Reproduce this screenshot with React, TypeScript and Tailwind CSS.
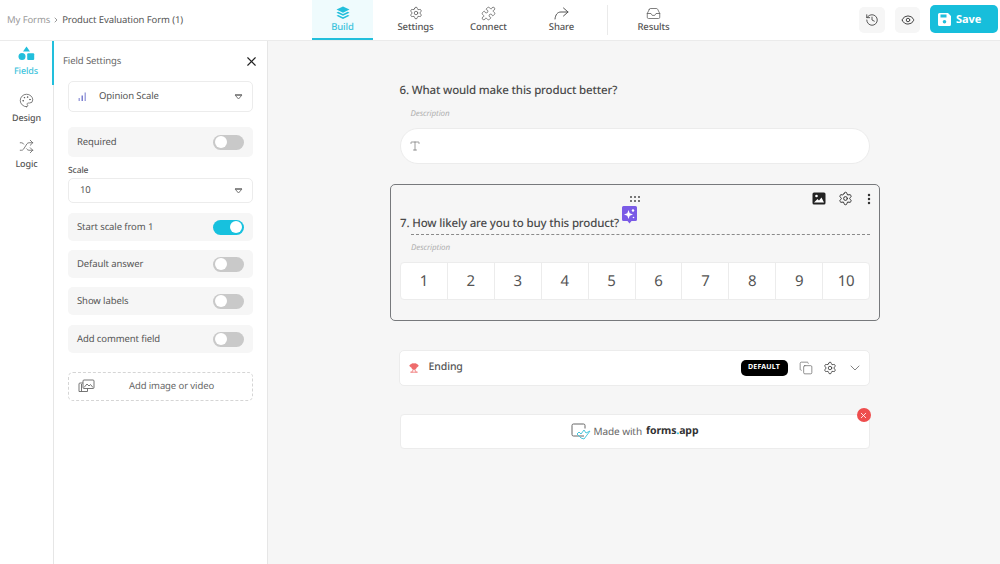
import React from 'react';
import { ChevronDown, ChevronRight, Copy, Eye, History, MoreVertical, Palette, Settings, Shuffle, Type, X, Inbox, Puzzle, Trophy } from 'lucide-react';

const font = { fontFamily: '"Noto Sans", "Open Sans", sans-serif' };

const Caret = () => (
  <svg width="9" height="6" viewBox="0 0 9 6" className="text-[#777]">
    <path d="M1 1h7L4.5 5z" fill="none" stroke="currentColor" strokeWidth="1" strokeLinejoin="round" />
    <path d="M1 1h7" stroke="currentColor" strokeWidth="1.4" />
  </svg>
);

const BuildIcon = () => (
  <svg width="14" height="14" viewBox="0 0 14 14" fill="#22bfdc">
    <path d="M7 0.5 13.5 3.6 7 6.7 0.5 3.6z" />
    <path d="M2.2 5.8 7 8.1l4.8-2.3 1.7.9L7 9.8.5 6.7z" />
    <path d="M2.2 8.9 7 11.2l4.8-2.3 1.7.9L7 13 .5 9.8z" />
  </svg>
);

const FieldsIcon = () => (
  <svg width="17" height="15" viewBox="0 0 17 15" fill="#22bfdc">
    <path d="M8.5 0.5 12 5.5H5z" />
    <circle cx="4" cy="10.5" r="3.5" />
    <rect x="9.2" y="7.2" width="7" height="6.8" rx="1" />
  </svg>
);

const ShareArrow = () => (
  <svg width="15" height="13" viewBox="0 0 15 13" fill="none" stroke="#555" strokeWidth="1" strokeLinecap="round" strokeLinejoin="round">
    <path d="M9.5 1 14 5 9.5 9" />
    <path d="M14 5H7C3.5 5 1.500 7.500 1 12" />
  </svg>
);

const SaveIcon = () => (
  <svg width="13" height="13" viewBox="0 0 13 13">
    <path d="M1.500 0H10l3 3v8.500A1.500 1.500 0 0 1 11.500 13h-10A1.500 1.500 0 0 1 0 11.500v-10A1.500 1.500 0 0 1 1.500 0z" fill="#fff" />
    <rect x="2.500" y="1.500" width="6" height="3" fill="#22bfdc" />
    <circle cx="6.500" cy="8.800" r="1.800" fill="#22bfdc" />
  </svg>
);

const ScaleIcon = () => (
  <svg width="9" height="9" viewBox="0 0 9 9" fill="#7b7fd0">
    <rect x="0.500" y="6" width="1.500" height="3" opacity="0.7" />
    <rect x="3.500" y="3.500" width="1.500" height="5.500" />
    <rect x="6.500" y="0.500" width="1.500" height="8.500" opacity="0.7" />
  </svg>
);

const MediaIcon = () => (
  <svg width="17" height="14" viewBox="0 0 17 14" fill="none" stroke="#666" strokeWidth="0.9" strokeLinejoin="round" className="absolute left-[9px] top-[6px]">
    <rect x="5" y="1" width="11" height="8.500" rx="1" />
    <path d="M6 8.500 9 5l2 2 1.500-1.500L15 8.500" />
    <path d="M5 4H2a1 1 0 0 0-1 1v7.500h8.500V9.500" />
    <path d="M3.500 5v7.500" />
  </svg>
);

const PictureIcon = () => (
  <svg width="14" height="13" viewBox="0 0 14 13">
    <rect x="0.500" y="0.500" width="13" height="12" rx="1.500" fill="#222" />
    <circle cx="4.500" cy="4" r="1.300" fill="#fff" />
    <path d="M2 10.500 5.500 7l1.500 1.500L9.500 5.500l2.500 5z" fill="#fff" />
  </svg>
);

const SparkBadge = () => (
  <svg width="15" height="18" viewBox="0 0 15 18" className="absolute left-[231px] top-[21px]">
    <path d="M1.500 0h12A1.500 1.500 0 0 1 15 1.500v12a1.500 1.500 0 0 1-1.500 1.500H9.500l-2 2.500-2-2.500h-4A1.500 1.500 0 0 1 0 13.500v-12A1.500 1.500 0 0 1 1.500 0z" fill="#7a5be6" />
    <path d="M6.500 4 7.700 7.300 11 8.500 7.700 9.700 6.500 13 5.300 9.700 2 8.500 5.300 7.300z" fill="#fff" />
    <circle cx="11" cy="4.500" r="1.200" fill="#fff" />
    <circle cx="11.500" cy="11.500" r="0.800" fill="#fff" />
  </svg>
);

const Toggle = ({ on = false }: { on?: boolean }) => (
  <div className={`flex h-[15px] w-[31px] items-center rounded-full px-[2px] ${on ? 'justify-end bg-[#17c1de]' : 'justify-start bg-[#c9c9c9]'}`}>
    <div className="h-[12px] w-[12px] rounded-full bg-white" />
  </div>
);

const OptionRow = ({ label, on, className = '' }: { label: string; on?: boolean; className?: string }) => (
  <div className={`flex h-[28px] items-center justify-between rounded-[5px] bg-[#f6f6f6] pl-[9px] pr-[9px] text-[9.500px] text-[#555] ${className}`}>
    <span>{label}</span>
    <Toggle on={on} />
  </div>
);

const NavTab = ({ icon, label, active }: { icon: React.ReactNode; label: string; active?: boolean }) => (
  <div className="flex w-[73px] justify-center">
    <div className={`flex h-[40px] w-[61px] flex-col items-center border-b-2 pt-[6px] ${active ? 'border-[#22bfdc] bg-[#effbfd] text-[#3cc3dc]' : 'border-transparent text-[#555]'}`}>
      <div className="flex h-[14px] items-center">{icon}</div>
      <span className="text-[9.500px] font-medium leading-[14px]">{label}</span>
    </div>
  </div>
);

const SideItem = ({ icon, label, active }: { icon: React.ReactNode; label: string; active?: boolean }) => (
  <div className={`flex h-[46px] flex-col items-center justify-start pt-[4px] ${active ? 'text-[#3cc3dc]' : 'text-[#555]'}`}>
    <div className="flex h-[16px] items-center">{icon}</div>
    <span className="mt-[3px] text-[9px] font-medium leading-[13px]">{label}</span>
  </div>
);

export default function App() {
  return (
    <div style={font} className="flex h-[564px] w-[1000px] flex-col overflow-hidden bg-white tracking-[-0.1px] [text-rendering:geometricPrecision]">
      {/* top bar */}
      <header className="flex h-[41px] shrink-0 items-center border-b border-[#ebebeb] bg-white">
        <div className="flex w-[306px] items-center pl-[7px] text-[9.500px]">
          <span className="text-[#9a9a9a]">My Forms</span>
          <ChevronRight size={8} className="mx-[2px] text-[#666]" />
          <span className="text-[#555]">Product Evaluation Form (1)</span>
        </div>
        <NavTab active icon={<BuildIcon />} label="Build" />
        <NavTab icon={<Settings size={14} strokeWidth={1.3} />} label="Settings" />
        <NavTab icon={<Puzzle size={15} strokeWidth={1.2} />} label="Connect" />
        <NavTab icon={<ShareArrow />} label="Share" />
        <div className="ml-[9px] h-[30px] w-px bg-[#eaeaea]" />
        <div className="ml-[9px]">
          <NavTab icon={<Inbox size={15} strokeWidth={1.2} />} label="Results" />
        </div>
        <div className="ml-auto flex items-center pr-[2px]">
          <div className="flex h-[26px] w-[26px] items-center justify-center rounded-[5px] bg-[#f6f6f6] text-[#444]">
            <History size={14} strokeWidth={1.5} />
          </div>
          <div className="ml-[10px] flex h-[26px] w-[25px] items-center justify-center rounded-[5px] bg-[#f6f6f6] text-[#444]">
            <Eye size={14} strokeWidth={1.7} />
          </div>
          <div className="mb-[2px] ml-[10px] flex h-[28px] w-[68px] items-center justify-start gap-[5px] rounded-[5px] bg-[#17bedb] pl-[8px] text-[11px] font-bold text-white">
            <SaveIcon />
            <span className="pt-[2px]">Save</span>
          </div>
        </div>
      </header>

      <div className="flex min-h-0 flex-1">
        {/* icon rail */}
        <aside className="w-[54px] shrink-0 border-r border-[#e6e6e6] bg-white">
          <div className="-mr-[1px] mb-[3px] h-[44px] border-r-2 border-[#22bfdc]">
            <SideItem active icon={<FieldsIcon />} label="Fields" />
          </div>
          <SideItem icon={<Palette size={15} strokeWidth={1.2} />} label="Design" />
          <SideItem icon={<Shuffle size={15} strokeWidth={1.2} />} label="Logic" />
        </aside>

        {/* settings panel */}
        <aside className="w-[214px] shrink-0 border-r border-[#e6e6e6] bg-white px-[14px]">
          <div className="-ml-[5px] flex h-[40px] items-center justify-between text-[9.500px] text-[#666]">
            <span>Field Settings</span>
            <X size={15} className="-mr-[6px] text-[#222]" strokeWidth={1.8} />
          </div>
          <div className="flex h-[31px] items-center rounded-[5px] border border-[#ececec] pl-[9px] pr-[9px] text-[9.500px] text-[#555]">
            <ScaleIcon />
            <span className="ml-[12px]">Opinion Scale</span>
            <span className="ml-auto flex"><Caret /></span>
          </div>
          <OptionRow label="Required" className="mt-[15px] h-[30px]" />
          <div className="mt-[8px] text-[8.500px] font-medium leading-[12px] text-[#555]">Scale</div>
          <div className="mt-[1px] flex h-[25px] items-center rounded-[5px] border border-[#ececec] pl-[11px] pr-[9px] text-[9.500px] text-[#555]">
            <span>10</span>
            <span className="ml-auto flex"><Caret /></span>
          </div>
          <OptionRow label="Start scale from 1" on className="mt-[10px]" />
          <OptionRow label="Default answer" className="mt-[9px]" />
          <OptionRow label="Show labels" className="mt-[9px]" />
          <OptionRow label="Add comment field" className="mt-[10px]" />
          <div className="relative mt-[19px] flex h-[29px] items-center justify-center rounded-[5px] border border-dashed border-[#d5d5d5] pl-[22px] text-[9.500px] text-[#666]">
            <MediaIcon />
            <span>Add image or video</span>
          </div>
        </aside>

        {/* form canvas */}
        <main className="flex min-w-0 flex-1 flex-col items-center bg-[#f6f6f6]">
          <div className="ml-[1px] w-[470px] pt-[41px]">
            <div className="text-[11.500px] font-medium leading-[18px] tracking-[-0.15px] text-[#4a4a4a]">6. What would make this product better?</div>
            <div className="mt-[8px] pl-[11px] text-[8px] italic leading-[12px] text-[#b0b0b0]">Description</div>
            <div className="mt-[8px] flex h-[36px] items-center rounded-full border border-[#ececec] bg-white pl-[8px] text-[#666]">
              <Type size={12} strokeWidth={1.3} />
            </div>
          </div>

          <section className="relative ml-[2px] mt-[20px] h-[137px] w-[490px] rounded-[5px] border-[1.5px] border-[#77797c] bg-[#f6f6f6] px-[9px]">
            <div className="absolute left-1/2 top-[11px] grid -translate-x-1/2 grid-cols-3 gap-[2px]">
              {[0, 1, 2, 3, 4, 5].map((dot) => (
                <span key={dot} className="h-[2px] w-[2px] bg-[#777]" />
              ))}
            </div>
            <div className="absolute right-[3px] top-[6px] flex items-center gap-[12px] text-[#333]">
              <PictureIcon />
              <Settings size={15} strokeWidth={1.6} />
              <MoreVertical size={14} strokeWidth={2.2} className="-ml-[3px]" />
            </div>
            <SparkBadge />
            <div className="pt-[30px] text-[11.500px] font-medium leading-[18px] tracking-[-0.15px] text-[#4a4a4a]">7. How likely are you to buy this product?</div>
            <div className="ml-[11px] mt-[1px] border-t border-dashed border-[#8a8a8a]" />
            <div className="ml-[11px] mt-[7px] text-[8px] italic leading-[12px] text-[#b0b0b0]">Description</div>
            <div className="mt-[8px] flex h-[38px] overflow-hidden rounded-[4px] border border-[#ececec] bg-white">
              {[1, 2, 3, 4, 5, 6, 7, 8, 9, 10].map((n) => (
                <div key={n} className="flex flex-1 items-center justify-center border-r border-[#ececec] text-[15px] text-[#555] last:border-r-0">
                  {n}
                </div>
              ))}
            </div>
          </section>

          <div className="mt-[29px] flex h-[36px] w-[471px] items-center rounded-[5px] border border-[#ececec] bg-white pl-[9px] pr-[6px]">
            <Trophy size={10} className="text-[#ee6b6b]" fill="#ee6b6b" />
            <span className="ml-[10px] text-[10.500px] font-medium text-[#555]">Ending</span>
            <span className="ml-auto flex h-[16px] w-[47px] items-center justify-center rounded-[5px] bg-black text-[7px] font-bold tracking-[0.2px] text-white">DEFAULT</span>
            <Copy size={14} strokeWidth={1.1} className="ml-[11px] text-[#555]" />
            <Settings size={14} strokeWidth={1.5} className="ml-[10px] text-[#444]" />
            <ChevronDown size={16} strokeWidth={1} className="ml-[10px] text-[#444]" />
          </div>

          <div className="relative ml-[1px] mt-[28px] flex h-[35px] w-[470px] items-center justify-center rounded-[4px] border border-[#ececec] bg-white text-[10px]">
            <svg width="21" height="17" viewBox="0 0 21 17" fill="none" className="mr-[2px]">
              <path d="M13 13H2.500A1.500 1.500 0 0 1 1 11.500v-9A1.500 1.500 0 0 1 2.500 1h10A1.500 1.500 0 0 1 14 2.500v3" stroke="#666" strokeWidth="1" />
              <path d="M6 11 8 9l2 2 3-4 2 3 4-2-6 8-3-1z" stroke="#4cc6dc" strokeWidth="1" strokeLinejoin="round" />
            </svg>
            <span className="text-[#666]">Made with</span>
            <span className="ml-[4px] text-[10.500px] font-bold text-[#333]">forms<span className="text-[#22bfdc]">.</span>app</span>
            <div className="absolute -top-[7px] right-[-2px] flex h-[14px] w-[14px] items-center justify-center rounded-full bg-[#ee4d4d] text-white">
              <X size={9} strokeWidth={2.2} />
            </div>
          </div>
        </main>
      </div>
    </div>
  );
}
